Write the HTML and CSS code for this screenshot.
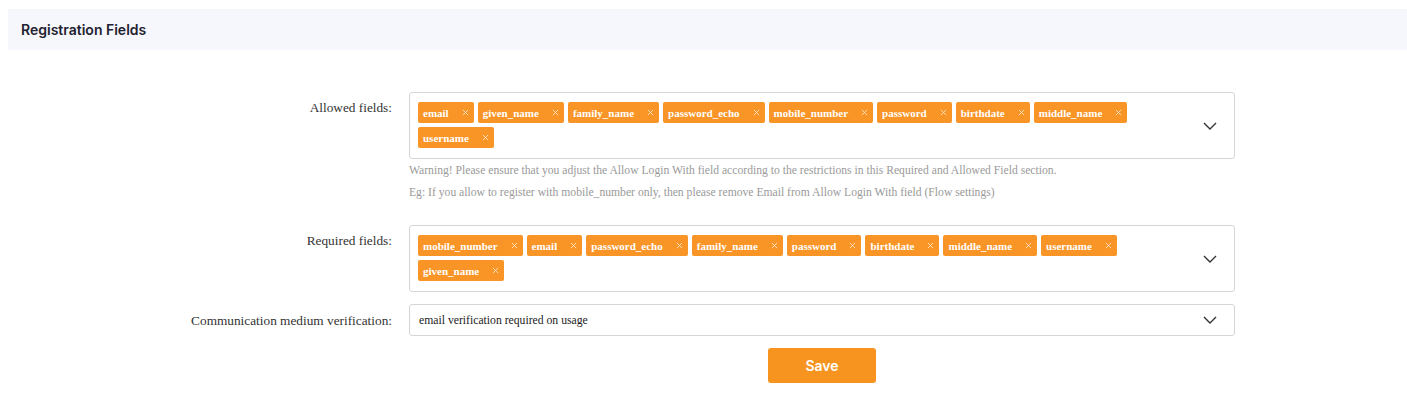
FILE: index.html
```html
<!DOCTYPE html>
<html>
<head>
<meta charset="utf-8">
<link rel="stylesheet" href="styles.css">
</head>
<body>
<div class="page">
  <div class="section-head">Registration Fields</div>
  <form class="form">
    <div class="row">
      <label class="label">Allowed fields:</label>
      <div class="control">
        <div class="select multi">
          <div class="tags">
            <span class="tag">email<svg class="x" viewBox="0 0 8 8"><path d="M1 1l6 6M7 1l-6 6"/></svg></span>
            <span class="tag">given_name<svg class="x" viewBox="0 0 8 8"><path d="M1 1l6 6M7 1l-6 6"/></svg></span>
            <span class="tag">family_name<svg class="x" viewBox="0 0 8 8"><path d="M1 1l6 6M7 1l-6 6"/></svg></span>
            <span class="tag">password_echo<svg class="x" viewBox="0 0 8 8"><path d="M1 1l6 6M7 1l-6 6"/></svg></span>
            <span class="tag">mobile_number<svg class="x" viewBox="0 0 8 8"><path d="M1 1l6 6M7 1l-6 6"/></svg></span>
            <span class="tag">password<svg class="x" viewBox="0 0 8 8"><path d="M1 1l6 6M7 1l-6 6"/></svg></span>
            <span class="tag">birthdate<svg class="x" viewBox="0 0 8 8"><path d="M1 1l6 6M7 1l-6 6"/></svg></span>
            <span class="tag">middle_name<svg class="x" viewBox="0 0 8 8"><path d="M1 1l6 6M7 1l-6 6"/></svg></span>
            <span class="tag">username<svg class="x" viewBox="0 0 8 8"><path d="M1 1l6 6M7 1l-6 6"/></svg></span>
          </div>
          <span class="chev"><svg width="14" height="8" viewBox="0 0 14 8"><path d="M1 1l6 6 6-6" fill="none" stroke="#333" stroke-width="1.4"/></svg></span>
        </div>
        <p class="hint">Warning! Please ensure that you adjust the Allow Login With field according to the restrictions in this Required and Allowed Field section.</p>
        <p class="hint">Eg: If you allow to register with mobile_number only, then please remove Email from Allow Login With field (Flow settings)</p>
      </div>
    </div>
    <div class="row row-req">
      <label class="label">Required fields:</label>
      <div class="control">
        <div class="select multi">
          <div class="tags">
            <span class="tag">mobile_number<svg class="x" viewBox="0 0 8 8"><path d="M1 1l6 6M7 1l-6 6"/></svg></span>
            <span class="tag">email<svg class="x" viewBox="0 0 8 8"><path d="M1 1l6 6M7 1l-6 6"/></svg></span>
            <span class="tag">password_echo<svg class="x" viewBox="0 0 8 8"><path d="M1 1l6 6M7 1l-6 6"/></svg></span>
            <span class="tag">family_name<svg class="x" viewBox="0 0 8 8"><path d="M1 1l6 6M7 1l-6 6"/></svg></span>
            <span class="tag">password<svg class="x" viewBox="0 0 8 8"><path d="M1 1l6 6M7 1l-6 6"/></svg></span>
            <span class="tag">birthdate<svg class="x" viewBox="0 0 8 8"><path d="M1 1l6 6M7 1l-6 6"/></svg></span>
            <span class="tag">middle_name<svg class="x" viewBox="0 0 8 8"><path d="M1 1l6 6M7 1l-6 6"/></svg></span>
            <span class="tag">username<svg class="x" viewBox="0 0 8 8"><path d="M1 1l6 6M7 1l-6 6"/></svg></span>
            <span class="tag">given_name<svg class="x" viewBox="0 0 8 8"><path d="M1 1l6 6M7 1l-6 6"/></svg></span>
          </div>
          <span class="chev"><svg width="14" height="8" viewBox="0 0 14 8"><path d="M1 1l6 6 6-6" fill="none" stroke="#333" stroke-width="1.4"/></svg></span>
        </div>
      </div>
    </div>
    <div class="row row-single">
      <label class="label">Communication medium verification:</label>
      <div class="control">
        <div class="select single">
          <span class="value">email verification required on usage</span>
          <span class="chev"><svg width="14" height="8" viewBox="0 0 14 8"><path d="M1 1l6 6 6-6" fill="none" stroke="#333" stroke-width="1.4"/></svg></span>
        </div>
      </div>
    </div>
    <div class="row actions">
      <div class="label"></div>
      <div class="control center">
        <button type="button" class="btn">Save</button>
      </div>
    </div>
  </form>
</div>
</body>
</html>
```

FILE: styles.css
```css
html, body {
  margin: 0;
  padding: 0;
  background: #fff;
}
body {
  padding: 9px 0 0 8px;
  font-family: "Liberation Serif", "Times New Roman", serif;
  color: #333;
}
.section-head {
  background: #f6f7fc;
  height: 41px;
  display: flex;
  align-items: center;
  padding-left: 13px;
  font-family: "Inter", "Open Sans", sans-serif;
  font-weight: 600;
  font-size: 14px;
  color: #1f2230;
}
.form {
  margin-top: 42px;
  display: flex;
  flex-direction: column;
}
.row {
  display: flex;
  align-items: flex-start;
}
.label {
  width: 384px;
  flex: none;
  text-align: right;
  font-size: 13.3px;
  color: #333;
  padding-top: 8px;
  margin-right: 17px;
}
.control {
  width: 826px;
  flex: none;
}
.select {
  border: 1px solid #d6d6d6;
  border-radius: 3px;
  display: flex;
  align-items: center;
  box-sizing: border-box;
  background: #fff;
}
.multi {
  min-height: 67px;
  padding: 9px 0 9px 8px;
}
.tags {
  flex: 1;
  display: flex;
  flex-wrap: wrap;
  gap: 4px 4px;
  padding-right: 50px;
  align-self: flex-start;
}
.tag {
  background: #f99426;
  color: #fff;
  font-weight: bold;
  font-size: 11px;
  height: 21px;
  display: inline-flex;
  align-items: center;
  padding: 0 5px 0 5px;
  border-radius: 2px;
  box-sizing: border-box;
}
.x {
  width: 7px;
  height: 7px;
  margin-left: 13px;
  fill: none;
  stroke: #fde6cc;
  stroke-width: 1;
}
.chev {
  width: 40px;
  flex: none;
  display: flex;
  justify-content: center;
  padding-right: 4px;
}
.hint {
  margin: 0;
  font-size: 11.65px;
  color: #9a9a9a;
  line-height: 22px;
}
.hint:first-of-type {
  margin-top: 1px;
}
.row-req {
  margin-top: 21px;
}
.row-single {
  margin-top: 12px;
}
.row-single .label {
  padding-top: 9px;
}
.single {
  height: 32px;
  padding-left: 9px;
}
.value {
  flex: 1;
  font-size: 11.7px;
  color: #222;
}
.center {
  display: flex;
  justify-content: center;
}
.actions {
  margin-top: 12px;
}
.actions .label {
  padding: 0;
}
.btn {
  width: 108px;
  height: 35px;
  border: 0;
  border-radius: 3px;
  background: #f7941f;
  color: #fff;
  font-family: "Inter", "Open Sans", sans-serif;
  font-weight: 600;
  font-size: 14px;
}
```
